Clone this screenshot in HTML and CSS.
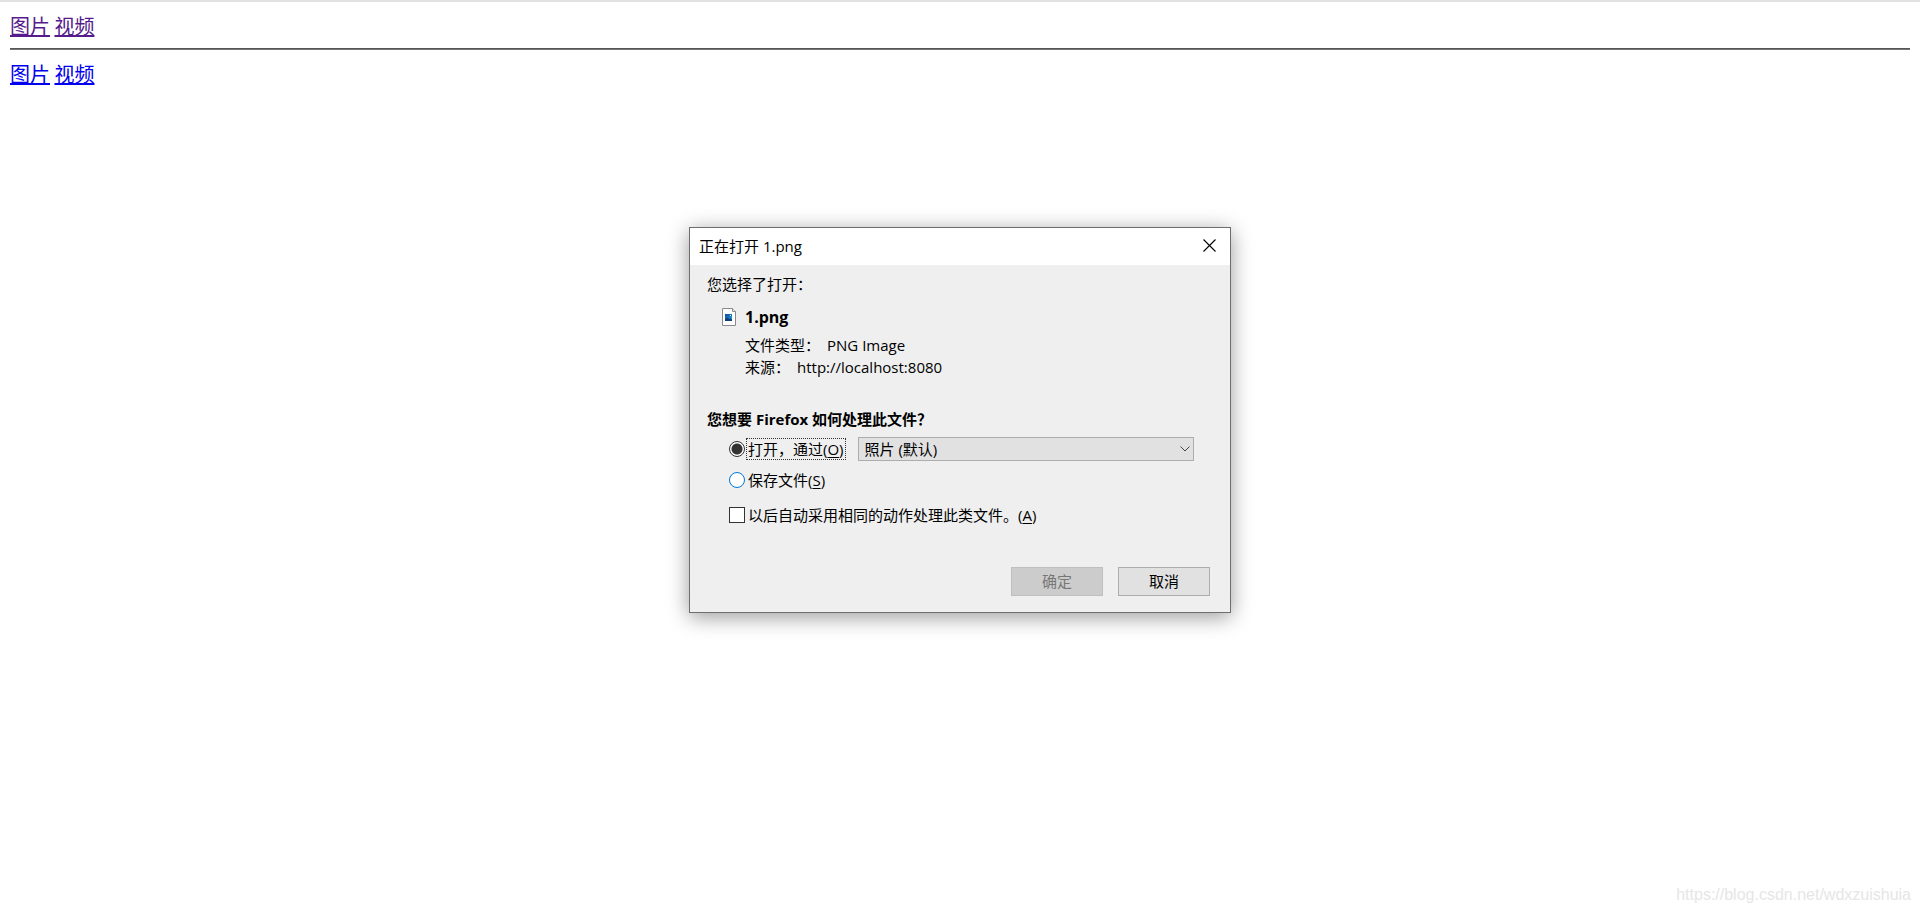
FILE: index.html
```html
<!DOCTYPE html>
<html lang="zh-CN">
<head>
    <meta charset="UTF-8">
    <meta name="viewport" content="width=device-width, initial-scale=1.0">
    <title>下载</title>
    <link rel="stylesheet" href="styles.css">
</head>
<body>

    <main class="page">
        <nav class="links visited">
            <a href="#">图片</a>
            <a href="#">视频</a>
        </nav>
        <hr>
        <nav class="links">
            <a href="#">图片</a>
            <a href="#">视频</a>
        </nav>
    </main>

    <!-- Download dialog -->
    <div class="dialog" role="dialog" aria-labelledby="dialog-title">
        <div class="titlebar">
            <span id="dialog-title">正在打开 1.png</span>
            <button class="close" type="button" aria-label="关闭">
                <svg width="13" height="13" viewBox="0 0 13 13">
                    <path d="M0.5 0.5L12.5 12.5M12.5 0.5L0.5 12.5" stroke="#000" stroke-width="1.1" fill="none"/>
                </svg>
            </button>
        </div>
        <form class="content">
            <p>您选择了打开：</p>
            <div class="file">
                <svg width="14" height="18" viewBox="0 0 14 18">
                    <defs>
                        <linearGradient id="photo" x1="0" y1="0" x2="1" y2="1">
                            <stop offset="0" stop-color="#0a4f9c"/>
                            <stop offset="1" stop-color="#2b9be0"/>
                        </linearGradient>
                    </defs>
                    <path d="M0.5 0.5H10.5L13.5 3.5V17.5H0.5Z" fill="#fdfdfd" stroke="#8a8a8a"/>
                    <path d="M10.5 0.5V3.5H13.5" fill="#e4e4e4" stroke="#8a8a8a"/>
                    <rect x="3" y="6" width="7" height="7" fill="url(#photo)"/>
                    <path d="M3 11L5.5 9.5L7.5 11L8.5 10.5L10 11.5V13H3Z" fill="#0b3f75"/>
                    <rect x="8" y="7" width="1" height="1" fill="#d5ecfb"/>
                </svg>
                <strong>1.png</strong>
            </div>
            <dl class="details">
                <div><dt>文件类型：</dt><dd>PNG Image</dd></div>
                <div><dt>来源：</dt><dd>http://localhost:8080</dd></div>
            </dl>
            <p class="question">您想要 Firefox 如何处理此文件？</p>
            <div class="option">
                <input type="radio" name="action" id="open" checked>
                <label for="open" class="focused">打开，通过(<u>O</u>)</label>
                <div class="select">
                    <select aria-label="应用程序">
                        <option>照片 (默认)</option>
                    </select>
                    <svg width="10" height="6" viewBox="0 0 10 6">
                        <path d="M0.5 0.5L5 5L9.5 0.5" stroke="#444" fill="none"/>
                    </svg>
                </div>
            </div>
            <div class="option save">
                <input type="radio" name="action" id="save">
                <label for="save">保存文件(<u>S</u>)</label>
            </div>
            <div class="option always">
                <input type="checkbox" id="always">
                <label for="always">以后自动采用相同的动作处理此类文件。(<u>A</u>)</label>
            </div>
            <div class="buttons">
                <button type="button" disabled>确定</button>
                <button type="button">取消</button>
            </div>
        </form>
    </div>

    <div class="watermark">https://blog.csdn.net/wdxzuishuia</div>

</body>
</html>
```
FILE: styles.css
```css
* {
    margin: 0;
    padding: 0;
    box-sizing: border-box;
}

body {
    background-color: #fff;
    color: #000;
    font-family: "Open Sans", "Noto Sans CJK SC", sans-serif;
    font-size: 15px;
    line-height: 20px;
}

.page {
    border-top: 2px solid #e2e2e2;
    padding: 10px 10px 0;
}

.links {
    font-family: "Noto Sans CJK SC", sans-serif;
    font-size: 20px;
    line-height: 28px;
}

.links a {
    color: #0000ee;
}

.links.visited a {
    color: #551a8b;
}

hr {
    height: 2px;
    margin: 8px 0 10px;
    border: none;
    border-top: 1px solid #555;
    border-bottom: 1px solid #777;
}

/* Dialog */
.dialog {
    position: absolute;
    top: 227px;
    left: 50%;
    transform: translateX(-50%);
    width: 542px;
    background: #efefef;
    border: 1px solid #6e6e6e;
    box-shadow: 0 4px 20px rgba(0, 0, 0, 0.4);
}

.titlebar {
    display: flex;
    align-items: center;
    justify-content: space-between;
    height: 37px;
    padding: 0 8px 2px 9px;
    background: #fff;
}

.close {
    display: flex;
    padding: 6px;
    background: none;
    border: none;
}

.content {
    padding: 9px 20px 16px 17px;
}

.file {
    display: flex;
    align-items: center;
    gap: 9px;
    height: 24px;
    margin: 11px 0 5px 15px;
    font-size: 16px;
}

.details {
    padding-left: 38px;
    line-height: 22px;
}

.details div {
    display: flex;
    gap: 7px;
}

.question {
    margin-top: 31px;
    font-weight: bold;
}

.option {
    display: flex;
    align-items: center;
    height: 24px;
    margin-top: 8px;
    padding-left: 22px;
}

.option.save {
    margin-top: 7px;
}

.option.always {
    margin-top: 11px;
}

.option label {
    padding: 0 1px;
    border: 1px solid transparent;
}

.option .focused {
    border: 1px dotted #333;
}

.option u {
    text-underline-offset: 2px;
}

.option input {
    appearance: none;
    width: 16px;
    height: 16px;
    margin-right: 1px;
    background: #fff;
    border: 1px solid #333;
}

.option input[type="radio"] {
    border-radius: 50%;
}

.option input[type="radio"]:checked {
    background: radial-gradient(circle, #333 5px, #fff 6px);
}

.option.save input {
    border-color: #0078d7;
}

.select {
    position: relative;
    flex: 1;
    margin: 0 16px 0 12px;
}

.select select {
    appearance: none;
    display: block;
    width: 100%;
    height: 24px;
    padding: 0 6px;
    background: #e1e1e1;
    border: 1px solid #adadad;
    border-radius: 0;
    color: #000;
    font: inherit;
}

.select svg {
    position: absolute;
    top: 9px;
    right: 4px;
    pointer-events: none;
}

.buttons {
    display: flex;
    justify-content: flex-end;
    gap: 15px;
    margin-top: 40px;
}

.buttons button {
    width: 92px;
    height: 29px;
    padding-bottom: 2px;
    background: #e1e1e1;
    border: 1px solid #adadad;
    color: #000;
    font: inherit;
}

.buttons button:disabled {
    background: #ccc;
    border-color: #bfbfbf;
    color: #777;
}

.watermark {
    position: absolute;
    right: 9px;
    bottom: 9px;
    color: #e6e6e6;
    font-family: "Liberation Sans", sans-serif;
    font-size: 16px;
}
```
